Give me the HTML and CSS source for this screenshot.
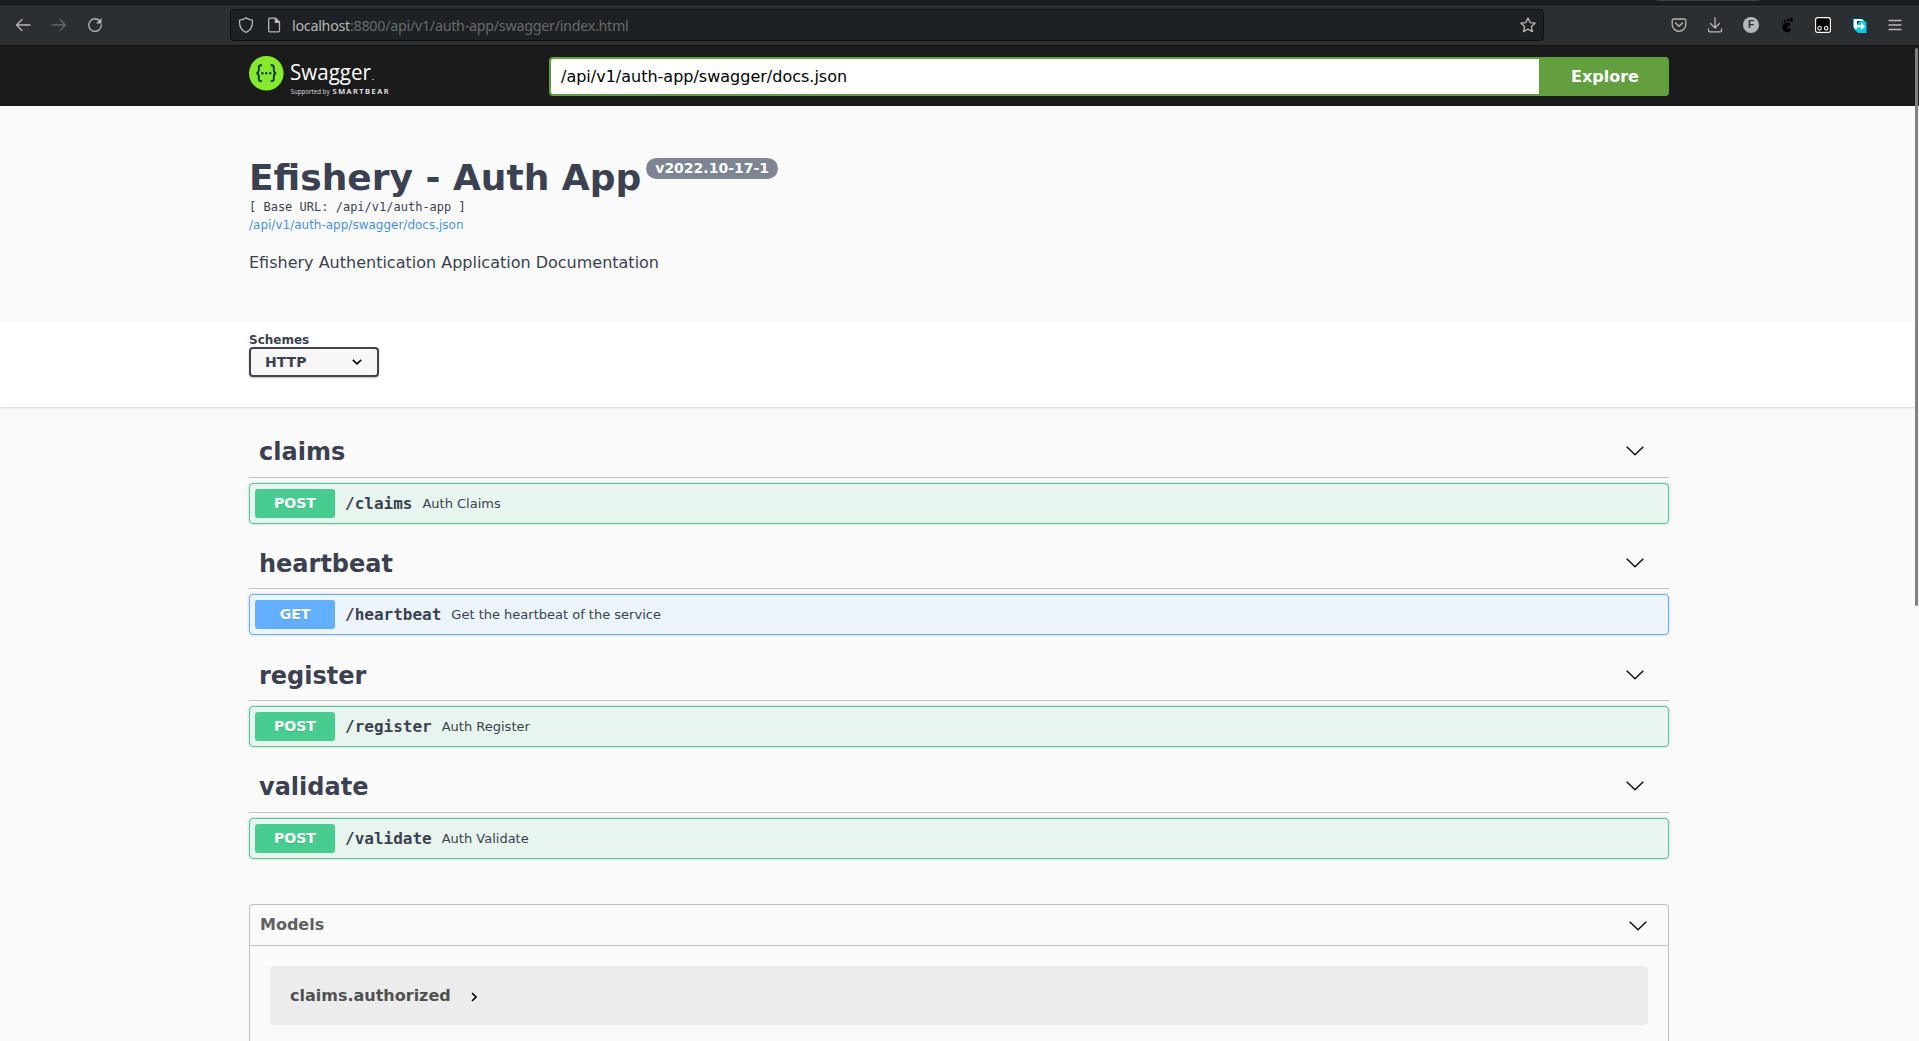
FILE: index.html
```html
<!DOCTYPE html>
<html lang="en">
<head>
<meta charset="utf-8">
<title>Swagger UI</title>
<link rel="stylesheet" href="styles.css">
</head>
<body>
<div class="tabstrip"><span class="tab-edge"></span></div>
<nav class="toolbar">
  <div class="nav-buttons">
    <svg class="ico" viewBox="0 0 16 16"><path d="M15 8H1.500M7 2.500 1.500 8 7 13.500"/></svg>
    <svg class="ico dim" viewBox="0 0 16 16"><path d="M1 8h13.500M9 2.500l5.500 5.500L9 13.500"/></svg>
    <svg class="ico" viewBox="0 0 16 16"><path d="M13.200 4.500A6.300 6.300 0 1 0 14.300 8"/><path class="solid" d="M14.500 1v5.500H9z"/></svg>
  </div>
  <div class="urlbar">
    <svg class="ico" viewBox="0 0 16 16"><path d="M8 .8C6.500 2.300 4 3.100 1.600 3.100 1.200 8.500 3 13.500 8 15.400c5-1.900 6.800-6.900 6.400-12.300C12 3.100 9.500 2.300 8 .8z"/></svg>
    <svg class="ico page-ico" viewBox="0 0 16 16"><path d="M4 1.200h5.500L13.500 5v8.500a1.300 1.300 0 0 1-1.300 1.300H4a1.300 1.300 0 0 1-1.300-1.300v-11A1.300 1.300 0 0 1 4 1.200zM9.300 1.200V5.300h4.200"/><path class="solid" d="M9 1l5 4.500H9z"/></svg>
    <span class="url"><b>localhost</b>:8800/api/v1/auth-app/swagger/index.html</span>
    <svg class="ico star" viewBox="0 0 16 16"><path d="M8 1l2.100 4.600 5 .6-3.700 3.400 1 5L8 12.100l-4.400 2.500 1-5L.9 6.200l5-.6z"/></svg>
  </div>
  <div class="extensions">
    <svg class="ico" viewBox="0 0 16 16"><path d="M2.500 2h11A1.300 1.300 0 0 1 14.800 3.300V7.500a6.800 6.800 0 0 1-13.600 0V3.300A1.300 1.300 0 0 1 2.500 2zM4.500 6 8 9.300 11.500 6"/></svg>
    <svg class="ico" viewBox="0 0 16 16"><path d="M8 .8v10M3.500 6.500 8 11l4.500-4.500M1.500 12v1.500a1.300 1.300 0 0 0 1.300 1.300h10.400a1.300 1.300 0 0 0 1.300-1.300V12"/></svg>
    <span class="letter-badge">F</span>
    <svg class="foot" viewBox="0 0 16 16"><path d="M12.500.7c-3 0-2.500 4-.7 4S15.500.7 12.500.7zM8.700 1.500c-1.400.2-1 3.200.1 3.100s1.300-3.300-.1-3.100zM5.600 2.900c-1.200.5-.3 2.900.6 2.500s.6-3-.6-2.500zM3 4.700c-1 .7.200 2.600.9 2s.1-2.700-.9-2zM9.500 5.800C6 5.500 2.800 7.500 3.200 10.400c.4 3 2.800 5 5.400 4.800 2.600-.2 4-2.700 2.700-4-1-.9-1.800.9-2.700.3-.9-.7-.2-1.700 1.200-2.200 1.500-.5 2.700-3.200-.3-3.500z"/></svg>
    <svg class="face" viewBox="0 0 16 16"><rect x=".6" y=".6" width="14.800" height="14.800" rx="2.200"/><circle cx="4.600" cy="11.300" r="1.800"/><circle cx="11.200" cy="11.300" r="1.800"/></svg>
    <svg class="arrow-app" viewBox="0 0 16 16"><path fill="#003e5e" d="M.5 0h11.300v6H5v5H.5z"/><path fill="#00cdec" d="M11 2l4.500 3.500V16H7l-4.500-4.500z"/><path fill="#fff" d="M2.500 2h8.300l2 2H6v8H4.500l-2-2z"/><path fill="#fff" d="M6 8.200h4V5.300l4 4-4 4v-2.800H6z"/></svg>
    <svg class="ico" viewBox="0 0 16 16"><path d="M2 3.500h12M2 8h12M2 12.500h12"/></svg>
  </div>
</nav>

<header class="topbar">
  <div class="wrapper topbar-row">
    <svg class="logo" viewBox="0 0 150 45">
      <circle cx="17.300" cy="18.300" r="17.300" fill="#85ea2d"/>
      <g fill="none" stroke="#173647" stroke-width="1.900"><path d="M13 10.300h-1.200q-2 0-2 2v2.800q0 2.800-2.300 3.100 2.300.3 2.300 3.100v2.800q0 2 2 2H13M21.600 10.300h1.200q2 0 2 2v2.800q0 2.800 2.300 3.100-2.300.3-2.300 3.100v2.800q0 2-2 2h-1.200"/></g>
      <g fill="#173647"><circle cx="13.400" cy="18.200" r="1.200"/><circle cx="17.300" cy="18.200" r="1.200"/><circle cx="21.200" cy="18.200" r="1.200"/></g>
      <text class="logo-name" x="41" y="25" textLength="81" lengthAdjust="spacingAndGlyphs">Swagger</text>
      <rect x="123" y="24" width="2" height="1" fill="#999"/>
      <text class="logo-by" x="41.500" y="39" textLength="39" lengthAdjust="spacingAndGlyphs">Supported by</text>
      <text class="logo-brand" x="83.500" y="39" textLength="56" lengthAdjust="spacing">SMARTBEAR</text>
    </svg>
    <form class="search">
      <div class="search-input">/api/v1/auth-app/swagger/docs.json</div>
      <div class="search-button">Explore</div>
    </form>
  </div>
</header>

<main>
  <section class="wrapper info">
    <h1 class="title">Efishery - Auth App<span class="version">v2022.10-17-1</span></h1>
    <div class="base-url">[ Base URL: /api/v1/auth-app ]</div>
    <a class="docs-link">/api/v1/auth-app/swagger/docs.json</a>
    <p class="description">Efishery Authentication Application Documentation</p>
  </section>

  <section class="schemes">
    <div class="wrapper">
      <div class="schemes-label">Schemes</div>
      <div class="select">HTTP<svg class="select-arrow" viewBox="0 0 10 6"><path d="M.8.800 5 4.800 9.200.8"/></svg></div>
    </div>
  </section>

  <section class="wrapper tags">
    <div class="tag">
      <h3 class="tag-head">claims<svg class="chevron" viewBox="0 0 18 10"><path d="M.7.7 9 8.700 17.300.7"/></svg></h3>
      <div class="op post"><span class="method">POST</span><span class="path">/claims</span><span class="summary">Auth Claims</span></div>
    </div>
    <div class="tag">
      <h3 class="tag-head">heartbeat<svg class="chevron" viewBox="0 0 18 10"><path d="M.7.7 9 8.700 17.300.7"/></svg></h3>
      <div class="op get"><span class="method">GET</span><span class="path">/heartbeat</span><span class="summary">Get the heartbeat of the service</span></div>
    </div>
    <div class="tag">
      <h3 class="tag-head">register<svg class="chevron" viewBox="0 0 18 10"><path d="M.7.7 9 8.700 17.300.7"/></svg></h3>
      <div class="op post"><span class="method">POST</span><span class="path">/register</span><span class="summary">Auth Register</span></div>
    </div>
    <div class="tag">
      <h3 class="tag-head">validate<svg class="chevron" viewBox="0 0 18 10"><path d="M.7.7 9 8.700 17.300.7"/></svg></h3>
      <div class="op post"><span class="method">POST</span><span class="path">/validate</span><span class="summary">Auth Validate</span></div>
    </div>
  </section>

  <section class="wrapper">
    <div class="models">
      <h4 class="models-head">Models<svg class="chevron" viewBox="0 0 18 10"><path d="M.7.7 9 8.700 17.300.7"/></svg></h4>
      <div class="model">claims.authorized<svg class="model-arrow" viewBox="0 0 6 10"><path d="M1 1l4 4-4 4"/></svg></div>
    </div>
  </section>
</main>
<div class="scrollbar"></div>
</body>
</html>
```
FILE: styles.css
```css
* { box-sizing: border-box; }
html { height: 100%; overflow: hidden; }
body {
  margin: 0;
  height: 1041px;
  overflow: hidden;
  background: #fafafa;
  color: #3b4151;
  font-family: "DejaVu Sans", sans-serif;
}
svg { display: block; flex: none; }

/* Browser chrome */
.tabstrip {
  height: 5px;
  background: #191d1f;
  border-bottom: 1px solid #0f1112;
  display: flex;
  justify-content: flex-end;
}
.tab-edge { width: 102px; height: 1px; margin-right: 160px; background: #3b3f41; }
.toolbar {
  height: 41px;
  background: #2b2f31;
  border-bottom: 1px solid #101213;
  display: flex;
  align-items: center;
}
.ico { width: 16px; height: 16px; fill: none; stroke: #b6b7b8; stroke-width: 1.3; stroke-linejoin: round; stroke-linecap: round; }
.ico .solid { fill: #b6b7b8; stroke: none; }
.ico.dim { stroke: #636669; }
.nav-buttons { width: 230px; padding-left: 15px; display: flex; gap: 20px; }
.urlbar {
  width: 1314px;
  height: 32px;
  padding: 0 7px;
  background: #1d2123;
  border: 1px solid #0e1011;
  border-radius: 4px;
  display: flex;
  align-items: center;
}
.page-ico { margin-left: 12px; }
.url { margin-left: 10px; font: 14.3px "Noto Sans", sans-serif; color: #686b6d; white-space: nowrap; letter-spacing: -0.27px; }
.url b { font-weight: 400; color: #b6b7b8; }
.star { margin-left: auto; }
.extensions { margin-left: 127px; display: flex; align-items: center; gap: 20px; }
.letter-badge {
  width: 16px; height: 16px;
  border-radius: 50%;
  background: #b6b7b8;
  color: #2b2f31;
  font: bold 10px/16px "Liberation Sans", sans-serif;
  text-align: center;
}
.foot, .face, .arrow-app { width: 16px; height: 16px; }
.foot { fill: #000; }
.face { fill: #000; stroke: #fff; stroke-width: 1.100; }

/* Swagger top bar */
.wrapper { width: 1420px; margin-left: 249px; }
.topbar { height: 60px; background: #1b1b1b; }
.topbar-row { height: 60px; display: flex; align-items: center; }
.logo { width: 150px; height: 45px; margin-top: 3px; }
.logo-name { font: 22.500px "Open Sans", "Noto Sans", sans-serif; fill: #fff; }
.logo-by { font: 7px "Open Sans", sans-serif; fill: #ddd; }
.logo-brand { font: 600 7.500px "Open Sans", sans-serif; fill: #fff; }
.search { margin: 1px 0 0 150px; flex: 1; display: flex; height: 39px; }
.search-input {
  flex: 1;
  border: 2px solid #62a03f;
  border-right: 0;
  border-radius: 4px 0 0 4px;
  background: #fff;
  color: #000;
  font-size: 16px;
  line-height: 35px;
  padding-left: 10px;
}
.search-button {
  width: 130px;
  padding-left: 2px;
  border-radius: 0 4px 4px 0;
  background: #62a03f;
  color: #fff;
  font-weight: 700;
  font-size: 16px;
  line-height: 39px;
  text-align: center;
}

/* API information */
.info { height: 216px; padding-top: 51px; display: flex; flex-direction: column; }
.title { margin: 0; height: 41px; font-size: 36px; line-height: 42px; display: flex; align-items: flex-start; }
.version {
  margin: 1px 0 0 5px;
  height: 21px;
  padding: 0 9px;
  border-radius: 21px;
  background: #7d8492;
  color: #fff;
  font-size: 14px;
  line-height: 20px;
}
.base-url { font: 12px/18px "DejaVu Sans Mono", monospace; }
.docs-link { font-size: 12px; line-height: 18px; color: #4990e2; }
.description { margin: 18px 0 0; font-size: 16px; line-height: 22px; }

/* Scheme picker */
.schemes {
  height: 85px;
  padding-top: 11px;
  background: #fff;
  box-shadow: 0 1px 2px rgba(0, 0, 0, .15);
}
.schemes-label { height: 14px; font-size: 12px; font-weight: 700; line-height: 15px; }
.select {
  width: 130px;
  height: 30px;
  padding: 0 15px 0 14px;
  border: 2px solid #41444e;
  border-radius: 4px;
  background: #f7f7f7;
  box-shadow: 0 1px 2px rgba(0, 0, 0, .25);
  font-size: 14px;
  font-weight: 700;
  line-height: 26px;
  display: flex;
  align-items: center;
  justify-content: space-between;
}
.select-arrow { width: 10px; height: 6px; fill: none; stroke: #000; stroke-width: 1.600; }

/* Operations */
.tags { padding-top: 20px; }
.tag { height: 112px; }
.tag:first-child { height: 111px; }
.tag-head {
  height: 51px;
  margin: 0 0 5px;
  padding: 0 25px 0 10px;
  border-bottom: 1px solid rgba(59, 65, 81, .3);
  font-size: 24px;
  display: flex;
  align-items: center;
  justify-content: space-between;
}
.tag:nth-child(2) .tag-head, .tag:nth-child(3) .tag-head { padding-top: 1px; }
.chevron { width: 18px; height: 10px; fill: none; stroke: #111; stroke-width: 1.500; }
.tag-head .chevron { margin-top: -3px; }
.tag:nth-child(2) .chevron, .tag:nth-child(3) .chevron { margin-top: -2px; }
.op {
  height: 41px;
  padding: 0 5px;
  border: 1px solid;
  border-radius: 4px;
  box-shadow: 0 0 3px rgba(0, 0, 0, .19);
  display: flex;
  align-items: center;
}
.post { border-color: #49cc90; background: #e7f5ee; }
.get { border-color: #61affe; background: #ebf3fb; }
.method {
  width: 80px;
  height: 29px;
  border-radius: 3px;
  color: #fff;
  font-size: 14px;
  font-weight: 700;
  line-height: 29px;
  text-align: center;
  text-shadow: 0 1px 0 rgba(0, 0, 0, .1);
}
.post .method { background: #49cc90; }
.get .method { background: #61affe; }
.path { margin: 0 10px; font: bold 16px "DejaVu Sans Mono", monospace; }
.summary { font-size: 13px; }

/* Models */
.models { margin-top: 30px; height: 137px; border: 1px solid rgba(59, 65, 81, .3); border-bottom: 0; border-radius: 4px 4px 0 0; }
.models-head {
  height: 41px;
  margin: 0 0 20px;
  padding: 0 21px 2px 10px;
  border-bottom: 1px solid rgba(59, 65, 81, .3);
  color: #606060;
  font-size: 16px;
  display: flex;
  align-items: center;
  justify-content: space-between;
}
.models-head .chevron { margin-top: 3px; }
.model {
  height: 59px;
  margin: 0 20px;
  padding-left: 20px;
  border-radius: 4px;
  background: #ececec;
  color: #505050;
  font-size: 16px;
  font-weight: 700;
  display: flex;
  align-items: center;
}
.model-arrow { width: 6px; height: 10px; margin: 3px 0 0 20px; fill: none; stroke: #000; stroke-width: 1.700; }

/* Page scrollbar overlays the content */
.scrollbar { position: absolute; top: 48px; right: 1px; width: 3px; height: 558px; border-radius: 2px; background: #7f8280; }
```
